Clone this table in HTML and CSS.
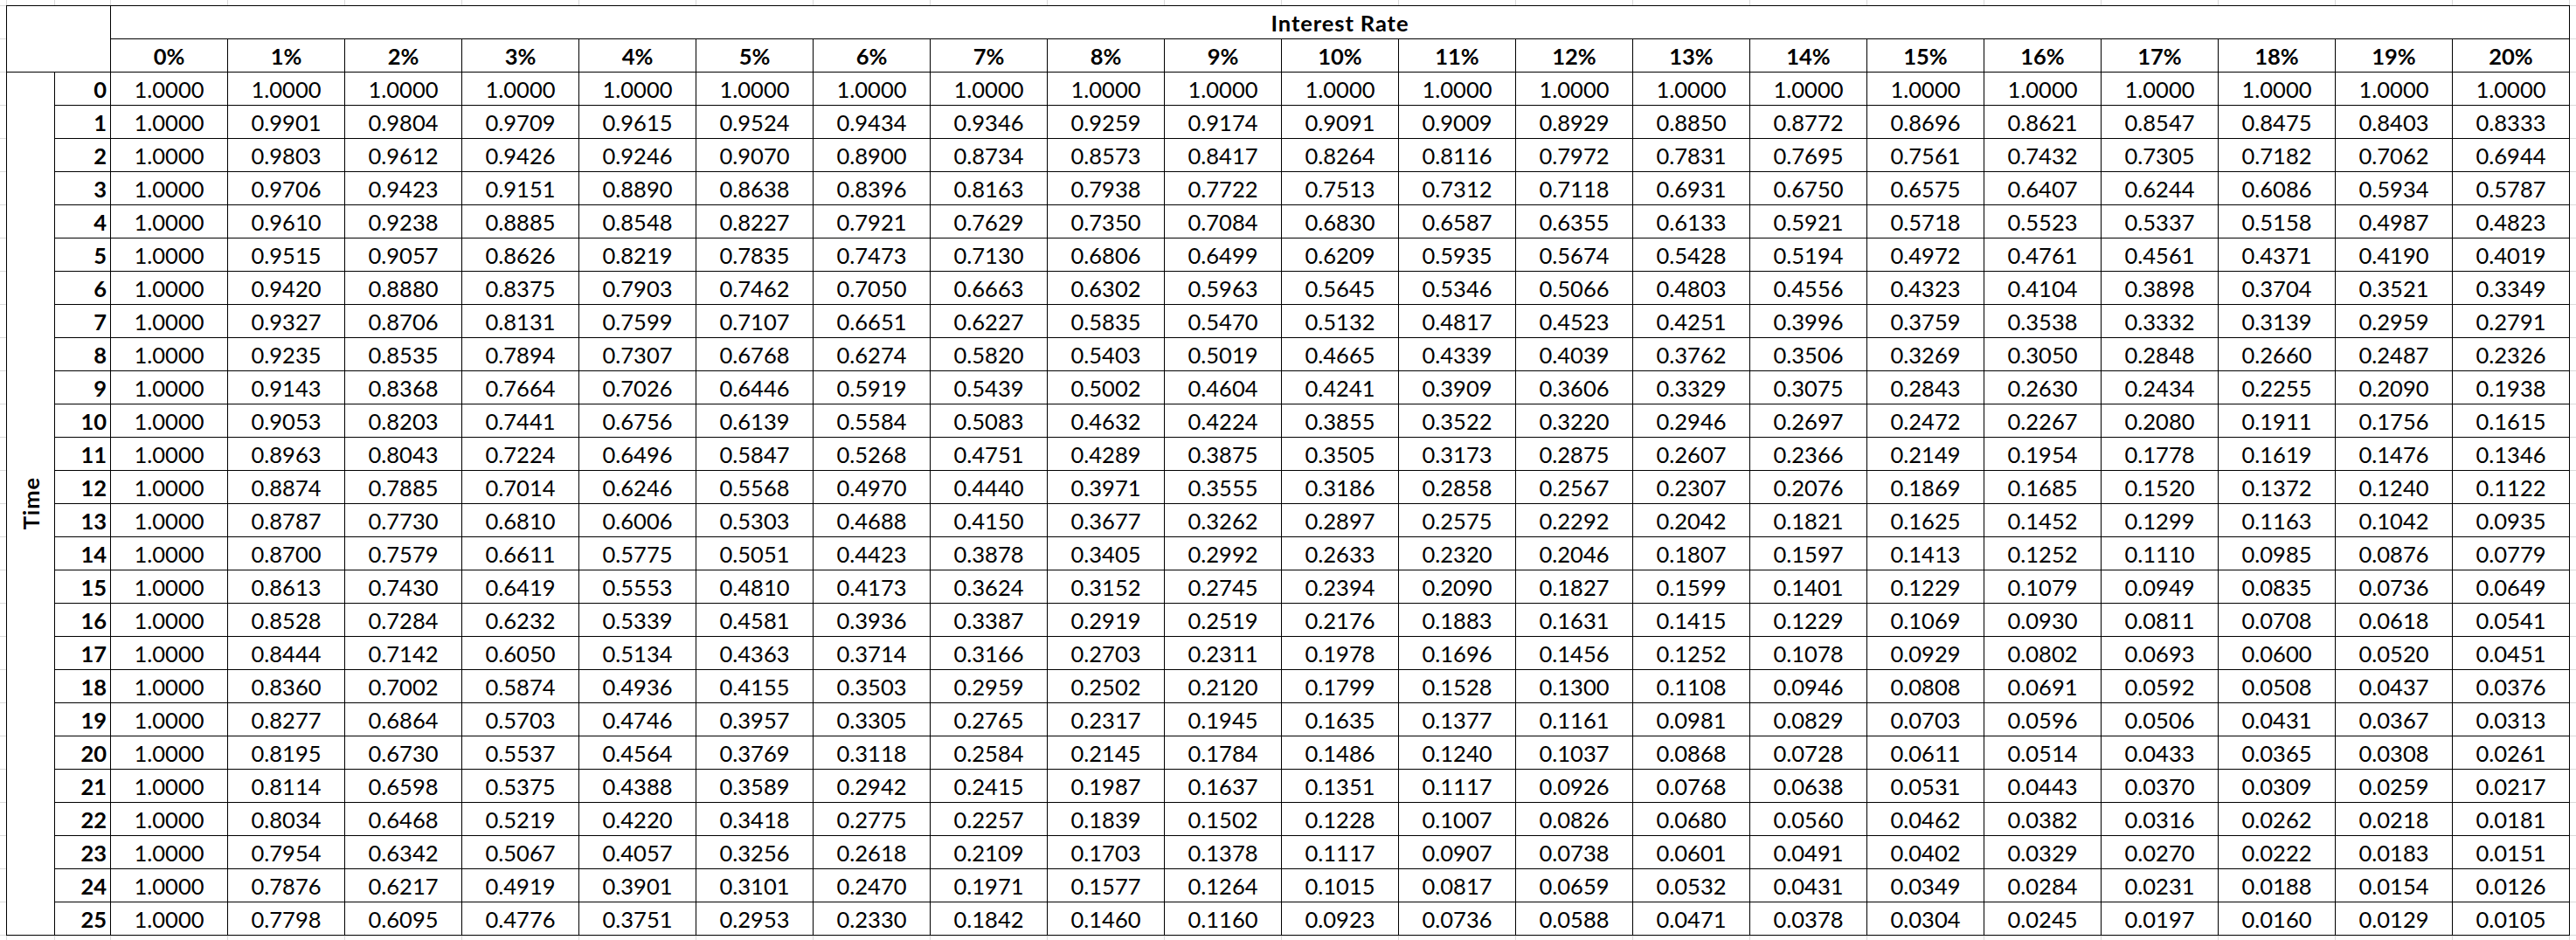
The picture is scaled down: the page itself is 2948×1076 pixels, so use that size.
FILE: index.html
```html
<!DOCTYPE html>
<html lang="en">
<head>
<meta charset="utf-8">
<title>Present Value Interest Factor Table</title>
<link rel="stylesheet" href="styles.css">
</head>
<body>
<div class="sheet">
<div class="corner"></div>
<div class="title">Interest Rate</div>
<div class="h">0%</div><div class="h">1%</div><div class="h">2%</div><div class="h">3%</div><div class="h">4%</div><div class="h">5%</div><div class="h">6%</div><div class="h">7%</div><div class="h">8%</div><div class="h">9%</div><div class="h">10%</div><div class="h">11%</div><div class="h">12%</div><div class="h">13%</div><div class="h">14%</div><div class="h">15%</div><div class="h">16%</div><div class="h">17%</div><div class="h">18%</div><div class="h">19%</div><div class="h">20%</div>
<div class="time"><span>Time</span></div>
<div class="n">0</div><div>1.0000</div><div>1.0000</div><div>1.0000</div><div>1.0000</div><div>1.0000</div><div>1.0000</div><div>1.0000</div><div>1.0000</div><div>1.0000</div><div>1.0000</div><div>1.0000</div><div>1.0000</div><div>1.0000</div><div>1.0000</div><div>1.0000</div><div>1.0000</div><div>1.0000</div><div>1.0000</div><div>1.0000</div><div>1.0000</div><div>1.0000</div>
<div class="n">1</div><div>1.0000</div><div>0.9901</div><div>0.9804</div><div>0.9709</div><div>0.9615</div><div>0.9524</div><div>0.9434</div><div>0.9346</div><div>0.9259</div><div>0.9174</div><div>0.9091</div><div>0.9009</div><div>0.8929</div><div>0.8850</div><div>0.8772</div><div>0.8696</div><div>0.8621</div><div>0.8547</div><div>0.8475</div><div>0.8403</div><div>0.8333</div>
<div class="n">2</div><div>1.0000</div><div>0.9803</div><div>0.9612</div><div>0.9426</div><div>0.9246</div><div>0.9070</div><div>0.8900</div><div>0.8734</div><div>0.8573</div><div>0.8417</div><div>0.8264</div><div>0.8116</div><div>0.7972</div><div>0.7831</div><div>0.7695</div><div>0.7561</div><div>0.7432</div><div>0.7305</div><div>0.7182</div><div>0.7062</div><div>0.6944</div>
<div class="n">3</div><div>1.0000</div><div>0.9706</div><div>0.9423</div><div>0.9151</div><div>0.8890</div><div>0.8638</div><div>0.8396</div><div>0.8163</div><div>0.7938</div><div>0.7722</div><div>0.7513</div><div>0.7312</div><div>0.7118</div><div>0.6931</div><div>0.6750</div><div>0.6575</div><div>0.6407</div><div>0.6244</div><div>0.6086</div><div>0.5934</div><div>0.5787</div>
<div class="n">4</div><div>1.0000</div><div>0.9610</div><div>0.9238</div><div>0.8885</div><div>0.8548</div><div>0.8227</div><div>0.7921</div><div>0.7629</div><div>0.7350</div><div>0.7084</div><div>0.6830</div><div>0.6587</div><div>0.6355</div><div>0.6133</div><div>0.5921</div><div>0.5718</div><div>0.5523</div><div>0.5337</div><div>0.5158</div><div>0.4987</div><div>0.4823</div>
<div class="n">5</div><div>1.0000</div><div>0.9515</div><div>0.9057</div><div>0.8626</div><div>0.8219</div><div>0.7835</div><div>0.7473</div><div>0.7130</div><div>0.6806</div><div>0.6499</div><div>0.6209</div><div>0.5935</div><div>0.5674</div><div>0.5428</div><div>0.5194</div><div>0.4972</div><div>0.4761</div><div>0.4561</div><div>0.4371</div><div>0.4190</div><div>0.4019</div>
<div class="n">6</div><div>1.0000</div><div>0.9420</div><div>0.8880</div><div>0.8375</div><div>0.7903</div><div>0.7462</div><div>0.7050</div><div>0.6663</div><div>0.6302</div><div>0.5963</div><div>0.5645</div><div>0.5346</div><div>0.5066</div><div>0.4803</div><div>0.4556</div><div>0.4323</div><div>0.4104</div><div>0.3898</div><div>0.3704</div><div>0.3521</div><div>0.3349</div>
<div class="n">7</div><div>1.0000</div><div>0.9327</div><div>0.8706</div><div>0.8131</div><div>0.7599</div><div>0.7107</div><div>0.6651</div><div>0.6227</div><div>0.5835</div><div>0.5470</div><div>0.5132</div><div>0.4817</div><div>0.4523</div><div>0.4251</div><div>0.3996</div><div>0.3759</div><div>0.3538</div><div>0.3332</div><div>0.3139</div><div>0.2959</div><div>0.2791</div>
<div class="n">8</div><div>1.0000</div><div>0.9235</div><div>0.8535</div><div>0.7894</div><div>0.7307</div><div>0.6768</div><div>0.6274</div><div>0.5820</div><div>0.5403</div><div>0.5019</div><div>0.4665</div><div>0.4339</div><div>0.4039</div><div>0.3762</div><div>0.3506</div><div>0.3269</div><div>0.3050</div><div>0.2848</div><div>0.2660</div><div>0.2487</div><div>0.2326</div>
<div class="n">9</div><div>1.0000</div><div>0.9143</div><div>0.8368</div><div>0.7664</div><div>0.7026</div><div>0.6446</div><div>0.5919</div><div>0.5439</div><div>0.5002</div><div>0.4604</div><div>0.4241</div><div>0.3909</div><div>0.3606</div><div>0.3329</div><div>0.3075</div><div>0.2843</div><div>0.2630</div><div>0.2434</div><div>0.2255</div><div>0.2090</div><div>0.1938</div>
<div class="n">10</div><div>1.0000</div><div>0.9053</div><div>0.8203</div><div>0.7441</div><div>0.6756</div><div>0.6139</div><div>0.5584</div><div>0.5083</div><div>0.4632</div><div>0.4224</div><div>0.3855</div><div>0.3522</div><div>0.3220</div><div>0.2946</div><div>0.2697</div><div>0.2472</div><div>0.2267</div><div>0.2080</div><div>0.1911</div><div>0.1756</div><div>0.1615</div>
<div class="n">11</div><div>1.0000</div><div>0.8963</div><div>0.8043</div><div>0.7224</div><div>0.6496</div><div>0.5847</div><div>0.5268</div><div>0.4751</div><div>0.4289</div><div>0.3875</div><div>0.3505</div><div>0.3173</div><div>0.2875</div><div>0.2607</div><div>0.2366</div><div>0.2149</div><div>0.1954</div><div>0.1778</div><div>0.1619</div><div>0.1476</div><div>0.1346</div>
<div class="n">12</div><div>1.0000</div><div>0.8874</div><div>0.7885</div><div>0.7014</div><div>0.6246</div><div>0.5568</div><div>0.4970</div><div>0.4440</div><div>0.3971</div><div>0.3555</div><div>0.3186</div><div>0.2858</div><div>0.2567</div><div>0.2307</div><div>0.2076</div><div>0.1869</div><div>0.1685</div><div>0.1520</div><div>0.1372</div><div>0.1240</div><div>0.1122</div>
<div class="n">13</div><div>1.0000</div><div>0.8787</div><div>0.7730</div><div>0.6810</div><div>0.6006</div><div>0.5303</div><div>0.4688</div><div>0.4150</div><div>0.3677</div><div>0.3262</div><div>0.2897</div><div>0.2575</div><div>0.2292</div><div>0.2042</div><div>0.1821</div><div>0.1625</div><div>0.1452</div><div>0.1299</div><div>0.1163</div><div>0.1042</div><div>0.0935</div>
<div class="n">14</div><div>1.0000</div><div>0.8700</div><div>0.7579</div><div>0.6611</div><div>0.5775</div><div>0.5051</div><div>0.4423</div><div>0.3878</div><div>0.3405</div><div>0.2992</div><div>0.2633</div><div>0.2320</div><div>0.2046</div><div>0.1807</div><div>0.1597</div><div>0.1413</div><div>0.1252</div><div>0.1110</div><div>0.0985</div><div>0.0876</div><div>0.0779</div>
<div class="n">15</div><div>1.0000</div><div>0.8613</div><div>0.7430</div><div>0.6419</div><div>0.5553</div><div>0.4810</div><div>0.4173</div><div>0.3624</div><div>0.3152</div><div>0.2745</div><div>0.2394</div><div>0.2090</div><div>0.1827</div><div>0.1599</div><div>0.1401</div><div>0.1229</div><div>0.1079</div><div>0.0949</div><div>0.0835</div><div>0.0736</div><div>0.0649</div>
<div class="n">16</div><div>1.0000</div><div>0.8528</div><div>0.7284</div><div>0.6232</div><div>0.5339</div><div>0.4581</div><div>0.3936</div><div>0.3387</div><div>0.2919</div><div>0.2519</div><div>0.2176</div><div>0.1883</div><div>0.1631</div><div>0.1415</div><div>0.1229</div><div>0.1069</div><div>0.0930</div><div>0.0811</div><div>0.0708</div><div>0.0618</div><div>0.0541</div>
<div class="n">17</div><div>1.0000</div><div>0.8444</div><div>0.7142</div><div>0.6050</div><div>0.5134</div><div>0.4363</div><div>0.3714</div><div>0.3166</div><div>0.2703</div><div>0.2311</div><div>0.1978</div><div>0.1696</div><div>0.1456</div><div>0.1252</div><div>0.1078</div><div>0.0929</div><div>0.0802</div><div>0.0693</div><div>0.0600</div><div>0.0520</div><div>0.0451</div>
<div class="n">18</div><div>1.0000</div><div>0.8360</div><div>0.7002</div><div>0.5874</div><div>0.4936</div><div>0.4155</div><div>0.3503</div><div>0.2959</div><div>0.2502</div><div>0.2120</div><div>0.1799</div><div>0.1528</div><div>0.1300</div><div>0.1108</div><div>0.0946</div><div>0.0808</div><div>0.0691</div><div>0.0592</div><div>0.0508</div><div>0.0437</div><div>0.0376</div>
<div class="n">19</div><div>1.0000</div><div>0.8277</div><div>0.6864</div><div>0.5703</div><div>0.4746</div><div>0.3957</div><div>0.3305</div><div>0.2765</div><div>0.2317</div><div>0.1945</div><div>0.1635</div><div>0.1377</div><div>0.1161</div><div>0.0981</div><div>0.0829</div><div>0.0703</div><div>0.0596</div><div>0.0506</div><div>0.0431</div><div>0.0367</div><div>0.0313</div>
<div class="n">20</div><div>1.0000</div><div>0.8195</div><div>0.6730</div><div>0.5537</div><div>0.4564</div><div>0.3769</div><div>0.3118</div><div>0.2584</div><div>0.2145</div><div>0.1784</div><div>0.1486</div><div>0.1240</div><div>0.1037</div><div>0.0868</div><div>0.0728</div><div>0.0611</div><div>0.0514</div><div>0.0433</div><div>0.0365</div><div>0.0308</div><div>0.0261</div>
<div class="n">21</div><div>1.0000</div><div>0.8114</div><div>0.6598</div><div>0.5375</div><div>0.4388</div><div>0.3589</div><div>0.2942</div><div>0.2415</div><div>0.1987</div><div>0.1637</div><div>0.1351</div><div>0.1117</div><div>0.0926</div><div>0.0768</div><div>0.0638</div><div>0.0531</div><div>0.0443</div><div>0.0370</div><div>0.0309</div><div>0.0259</div><div>0.0217</div>
<div class="n">22</div><div>1.0000</div><div>0.8034</div><div>0.6468</div><div>0.5219</div><div>0.4220</div><div>0.3418</div><div>0.2775</div><div>0.2257</div><div>0.1839</div><div>0.1502</div><div>0.1228</div><div>0.1007</div><div>0.0826</div><div>0.0680</div><div>0.0560</div><div>0.0462</div><div>0.0382</div><div>0.0316</div><div>0.0262</div><div>0.0218</div><div>0.0181</div>
<div class="n">23</div><div>1.0000</div><div>0.7954</div><div>0.6342</div><div>0.5067</div><div>0.4057</div><div>0.3256</div><div>0.2618</div><div>0.2109</div><div>0.1703</div><div>0.1378</div><div>0.1117</div><div>0.0907</div><div>0.0738</div><div>0.0601</div><div>0.0491</div><div>0.0402</div><div>0.0329</div><div>0.0270</div><div>0.0222</div><div>0.0183</div><div>0.0151</div>
<div class="n">24</div><div>1.0000</div><div>0.7876</div><div>0.6217</div><div>0.4919</div><div>0.3901</div><div>0.3101</div><div>0.2470</div><div>0.1971</div><div>0.1577</div><div>0.1264</div><div>0.1015</div><div>0.0817</div><div>0.0659</div><div>0.0532</div><div>0.0431</div><div>0.0349</div><div>0.0284</div><div>0.0231</div><div>0.0188</div><div>0.0154</div><div>0.0126</div>
<div class="n">25</div><div>1.0000</div><div>0.7798</div><div>0.6095</div><div>0.4776</div><div>0.3751</div><div>0.2953</div><div>0.2330</div><div>0.1842</div><div>0.1460</div><div>0.1160</div><div>0.0923</div><div>0.0736</div><div>0.0588</div><div>0.0471</div><div>0.0378</div><div>0.0304</div><div>0.0245</div><div>0.0197</div><div>0.0160</div><div>0.0129</div><div>0.0105</div>
</div>
</body>
</html>
```
FILE: styles.css
```css
html {
  height: 100%;
  background-color: #fff;
  background-image:
    linear-gradient(#dadada, #dadada),
    linear-gradient(#dadada, #dadada),
    linear-gradient(to right, #dadada 1px, transparent 1px),
    linear-gradient(#dadada 1px, transparent 1px);
  background-size: 1px 100%, 1px 100%, 134px 100%, 100% 38px;
  background-position: 7px 0, 62px 0, 126px 0, 0 6px;
  background-repeat: no-repeat, no-repeat, repeat-x, repeat-y;
}

body {
  margin: 0;
  padding: 6px 0 0 7px;
  font-family: Lato, "Open Sans", sans-serif;
  color: #000;
}

.sheet {
  display: grid;
  grid-template-columns: 54px 63px repeat(21, 133px);
  grid-auto-rows: 37px;
  gap: 1px;
  padding: 1px;
  background: #000;
  width: max-content;
}

.sheet > div {
  background: #fff;
  font-size: 25.5px;
  line-height: 35px;
  padding-top: 2px;
  text-align: center;
  white-space: nowrap;
}

.sheet > .corner {
  grid-column: span 2;
  grid-row: span 2;
}

.sheet > .title {
  grid-column: span 21;
  font-weight: 700;
  letter-spacing: 0.9px;
}

.sheet > .h {
  font-weight: 700;
}

.sheet > .n {
  font-weight: 700;
  text-align: right;
  padding-right: 4px;
}

.sheet > .time {
  grid-row: span 26;
  display: flex;
  align-items: center;
  justify-content: center;
  padding: 0;
  font-weight: 700;
}

.time span {
  writing-mode: vertical-rl;
  transform: rotate(180deg);
  line-height: 30px;
  letter-spacing: 0.9px;
}
```
